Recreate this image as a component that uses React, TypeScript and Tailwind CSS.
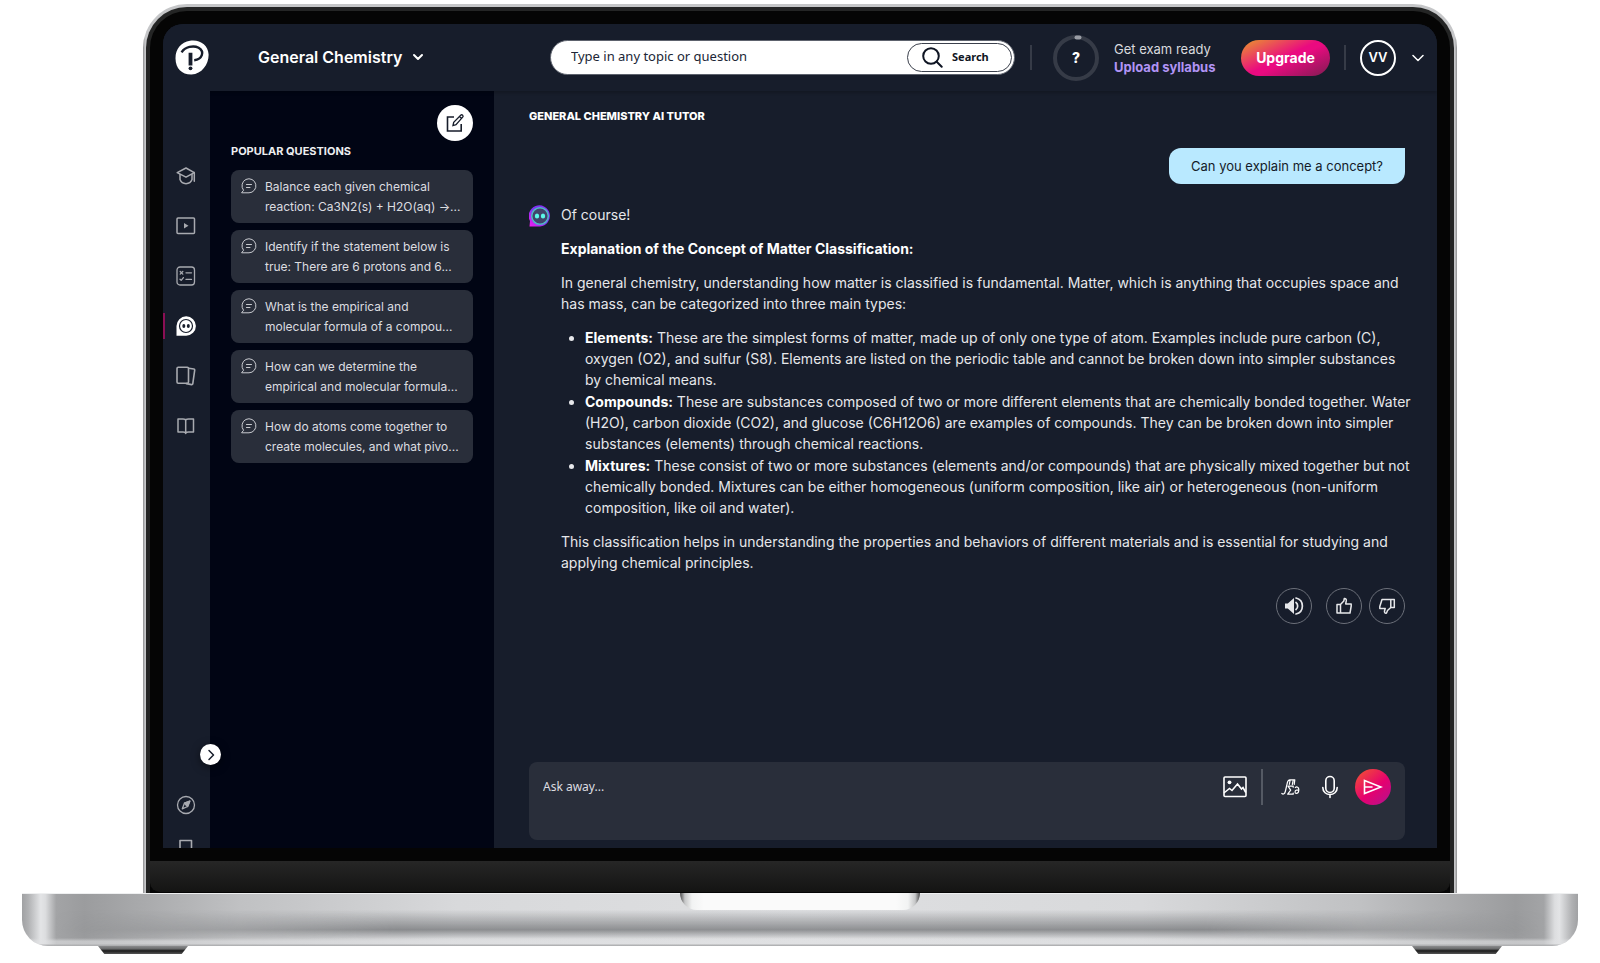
import React from "react";

const questions = [
  ["Balance each given chemical", "reaction: Ca3N2(s) + H2O(aq) →..."],
  ["Identify if the statement below is", "true: There are 6 protons and 6..."],
  ["What is the empirical and", "molecular formula of a compou..."],
  ["How can we determine the", "empirical and molecular formula..."],
  ["How do atoms come together to", "create molecules, and what pivo..."],
];

const matterTypes = [
  {
    name: "Elements:",
    text: "These are the simplest forms of matter, made up of only one type of atom. Examples include pure carbon (C), oxygen (O2), and sulfur (S8). Elements are listed on the periodic table and cannot be broken down into simpler substances by chemical means.",
  },
  {
    name: "Compounds:",
    text: "These are substances composed of two or more different elements that are chemically bonded together. Water (H2O), carbon dioxide (CO2), and glucose (C6H12O6) are examples of compounds. They can be broken down into simpler substances (elements) through chemical reactions.",
  },
  {
    name: "Mixtures:",
    text: "These consist of two or more substances (elements and/or compounds) that are physically mixed together but not chemically bonded. Mixtures can be either homogeneous (uniform composition, like air) or heterogeneous (non-uniform composition, like oil and water).",
  },
];

const stroke = {
  fill: "none",
  stroke: "currentColor",
  strokeLinecap: "round",
  strokeLinejoin: "round",
} as const;

const Logo = () => (
  <svg width="34" height="35" viewBox="0 0 34 35" aria-hidden="true">
    <path d="M15 .8C24.500-.8 33.300 5 33.600 14.500 33.900 24 27 34.300 16.500 34.500 7 34.700.600 28.500.500 18.500.400 9 6 2.200 15 .8z" fill="#fff" />
    <path d="M6.600 12.300C10 6.800 18.500 5 23.600 7.800c6.400 3.800 3.600 11.800-4.400 12.400" fill="none" stroke="#171d2b" strokeWidth="2.400" />
    <path d="M13.600 12.800h3.800v12.700h-3.800z" fill="#171d2b" />
    <circle cx="15.500" cy="28.300" r="1.900" fill="#171d2b" />
  </svg>
);

const ChatIcon = () => (
  <svg {...stroke} className="shrink-0 text-[#c9cbd0]" width="16" height="16" viewBox="0 0 16 16" aria-hidden="true">
    <path d="M1 14.800h7A7 7 0 1 0 2.300 12z" />
    <path d="M5.500 6.500h5M5.500 9.500h3.500" />
  </svg>
);

const navItems = [
  {
    label: "Learn",
    icon: (
      <svg {...stroke} strokeWidth="1.500" width="20" height="20" viewBox="0 0 20 20">
        <path d="M10 2 1.200 6.600 10 11.200l8.300-4.600z" />
        <path d="M4 8.400v5.200C6 19 14 19 16 13.600V8.400M18.300 6.600v8.600" />
      </svg>
    ),
  },
  {
    label: "Videos",
    icon: (
      <svg {...stroke} strokeWidth="1.500" width="20" height="20" viewBox="0 0 20 20">
        <rect x="1" y="2" width="17.500" height="15.500" rx="1" />
        <path d="m8 7 4.500 2.800L8 12.600z" fill="currentColor" stroke="none" />
      </svg>
    ),
  },
  {
    label: "Practice",
    icon: (
      <svg {...stroke} strokeWidth="1.300" width="20" height="20" viewBox="0 0 20 20">
        <rect x="1" y="1" width="17.500" height="18" rx="3" />
        <path d="m4.200 5.500 2.600 2.600m0-2.600L4.200 8.100M10 6.800h5.500M4 13.200l1.200 1.200 2.200-2.800M10 13.400h5.500" />
      </svg>
    ),
  },
  {
    label: "AI tutor",
    active: true,
    icon: (
      <svg width="20" height="20" viewBox="0 0 20 20">
        <path d="M.500 19.700V10A9.700 9.700 0 1 1 10.200 19.700z" fill="#fff" />
        <circle cx="10" cy="10" r="6.500" fill="#fff" stroke="#171d2b" strokeWidth="1.200" />
        <ellipse cx="7.800" cy="10" rx="1.500" ry="2" fill="#171d2b" />
        <ellipse cx="12.300" cy="10" rx="1.500" ry="2" fill="#171d2b" />
      </svg>
    ),
  },
  {
    label: "Flashcards",
    icon: (
      <svg {...stroke} strokeWidth="1.600" width="20" height="20" viewBox="0 0 20 20">
        <rect x="1" y="1.200" width="11.500" height="16" rx="1.200" />
        <path d="m12.800 2.200 5 .8c.7.1 1 .6.900 1.200L16.800 17.700c-.1.700-.6 1-1.200.9l-5.200-1" />
      </svg>
    ),
  },
  {
    label: "Textbook",
    icon: (
      <svg {...stroke} strokeWidth="1.500" width="20" height="20" viewBox="0 0 20 20">
        <path d="M2 3h5c1.600 0 2.700.5 2.700 1.500C9.700 3.500 11 3 12.500 3h5v13h-5c-1.500 0-2.800.5-2.800 1.500 0-1-1.100-1.500-2.700-1.500H2zM9.700 4.500v13" />
      </svg>
    ),
  },
];

const Header = () => (
  <header className="relative z-10 flex h-[67px] shrink-0 items-center bg-[#171d2b] pl-3 pr-[13px] shadow-[0_2px_3px_rgba(0,0,0,0.2)]">
    <a href="#home" aria-label="Home">
      <Logo />
    </a>
    <button type="button" className="ml-[49px] flex items-center gap-[10px] pb-[2px] text-base font-semibold text-white">
      General Chemistry
      <svg {...stroke} strokeWidth="2" width="12" height="8" viewBox="0 0 12 8" aria-hidden="true">
        <path d="m2 2 4 4 4-4" />
      </svg>
    </button>

    <form
      role="search"
      className="ml-auto flex h-[35px] w-[465px] items-center rounded-full border border-[#5d626d] bg-white pl-5 pr-[2px] font-['Noto_Sans',sans-serif] text-[#0f1523]"
      onSubmit={(e) => e.preventDefault()}
    >
      <input
        type="text"
        aria-label="Search"
        placeholder="Type in any topic or question"
        className="min-w-0 flex-1 pb-[2px] text-[13px] outline-none placeholder:text-[#202636]"
      />
      <button type="submit" className="flex h-[29px] w-[105px] items-center gap-[9px] rounded-full border border-[#3b404c] pl-[14px] text-[11px] font-bold">
        <svg {...stroke} strokeWidth="2" width="21" height="21" viewBox="0 0 21 21" aria-hidden="true">
          <circle cx="9" cy="9" r="7.800" />
          <path d="m14.700 14.700 5 5" />
        </svg>
        Search
      </button>
    </form>

    <div className="ml-[15px] h-[25px] w-[2px] bg-[#363b47]" />

    <div className="ml-[21px] grid size-[46px] place-items-center">
      <svg className="col-start-1 row-start-1" width="46" height="46" viewBox="0 0 46 46" aria-hidden="true">
        <circle cx="23" cy="23" r="21" fill="none" stroke="#363b47" strokeWidth="4" />
        <path d="M23.500 2.500h3" stroke="#9a9da5" strokeWidth="4" strokeLinecap="round" />
      </svg>
      <span className="col-start-1 row-start-1 text-sm font-extrabold text-white">?</span>
    </div>
    <div className="ml-[15px] w-[127px] text-[13px] leading-[18px]">
      <p className="text-[#d9dade]">Get exam ready</p>
      <a href="#syllabus" className="font-bold text-[#b194f5]">
        Upload syllabus
      </a>
    </div>
    <button
      type="button"
      className="h-[36px] w-[89px] rounded-full bg-[linear-gradient(155deg,#ea8a34_5%,#ea0a80_48%,#ea0a80_55%,#8a1a56_95%)] text-sm font-bold text-white"
    >
      Upgrade
    </button>
    <div className="ml-[14px] h-[25px] w-[2px] bg-[#363b47]" />
    <button type="button" aria-label="Account" className="ml-[14px] flex items-center gap-4 text-white">
      <span className="grid size-[36px] place-items-center rounded-full border-2 border-white text-[13px] font-semibold">VV</span>
      <svg {...stroke} strokeWidth="1.500" width="12" height="8" viewBox="0 0 12 8" aria-hidden="true">
        <path d="m1 1.500 5 5 5-5" />
      </svg>
    </button>
  </header>
);

const Sidebar = () => (
  <aside className="relative z-10 flex w-[47px] shrink-0 flex-col bg-[#171d2b] text-[#a8aab0]">
    <nav className="mt-[75px] flex flex-col gap-[30px]">
      {navItems.map((item) => (
        <a key={item.label} href="#nav" aria-label={item.label} className="relative flex h-5 justify-center pr-[2px]">
          {item.active && <span className="absolute -top-[3px] left-0 h-[26px] w-[2px] bg-[#8a0f55]" />}
          {item.icon}
        </a>
      ))}
    </nav>
    <div className="mt-auto flex h-[53px] flex-col items-center gap-6 overflow-hidden pr-[2px]">
      <a href="#explore" aria-label="Explore" className="shrink-0">
        <svg {...stroke} strokeWidth="1.300" width="20" height="20" viewBox="0 0 20 20">
          <circle cx="10" cy="10" r="8.500" />
          <path d="M13.800 6.200 8.500 8 6.300 13.800l5.300-2.300z" />
          <path d="M13.800 6.200 8.500 8l1.500 2 1.600 1.500z" fill="currentColor" />
        </svg>
      </a>
      <a href="#bookmarks" aria-label="Bookmarks" className="shrink-0">
        <svg {...stroke} strokeWidth="1.600" width="20" height="20" viewBox="0 0 20 20">
          <path d="M4 1.500h11.500V18L9.700 14 4 18z" />
        </svg>
      </a>
    </div>
    <button
      type="button"
      aria-label="Expand menu"
      className="absolute -right-[11px] bottom-[83px] grid size-[21px] place-items-center rounded-full bg-white text-[#171d2b] shadow-[0_2px_8px_rgba(0,0,0,0.5)]"
    >
      <svg {...stroke} strokeWidth="1.500" width="8" height="12" viewBox="0 0 8 12">
        <path d="m2 1.500 4.500 4.500L2 10.500" />
      </svg>
    </button>
  </aside>
);

const PopularQuestions = () => (
  <section className="flex w-[284px] shrink-0 flex-col bg-[#010514] px-[21px] pt-[14px]">
    <button type="button" aria-label="New chat" className="grid size-[36px] place-items-center self-end rounded-full bg-white text-[#171d2b]">
      <svg {...stroke} strokeLinecap="butt" strokeLinejoin="miter" strokeWidth="1.600" width="20" height="20" viewBox="0 0 20 20">
        <path d="M9 4H2.500v14h13.700v-7" />
        <path d="m8 12.500.7-3.100 7-7.200c1.300-1.200 3.200.6 2 1.900L11 11.600zM14.500 3.500l2.200 2.100" strokeWidth="1.300" />
      </svg>
    </button>
    <h2 className="text-[11px] font-bold leading-5 text-[#eeeff1]">POPULAR QUESTIONS</h2>
    <ul className="mt-[9px] flex flex-col gap-[7px]">
      {questions.map(([first, second]) => (
        <li key={first}>
          <button type="button" className="flex h-[53px] w-full gap-2 rounded-lg bg-[#292e3a] px-[10px] py-[7px] text-left text-xs leading-5 text-[#dcdde0]">
            <span className="pt-px">
              <ChatIcon />
            </span>
            <span className="whitespace-nowrap">
              {first}
              <br />
              {second}
            </span>
          </button>
        </li>
      ))}
    </ul>
  </section>
);

const BotIcon = () => (
  <svg className="mt-px shrink-0" width="22" height="22" viewBox="0 0 22 22" aria-hidden="true">
    <defs>
      <linearGradient id="bot" x1="0" y1="1" x2="1" y2="0">
        <stop offset="0" stopColor="#f81bf0" />
        <stop offset=".5" stopColor="#7b35f2" />
        <stop offset="1" stopColor="#8a2cf5" />
      </linearGradient>
    </defs>
    <path d="M.500 21.500 1 16A10.600 10.600 0 1 1 11 21.500z" fill="url(#bot)" />
    <circle cx="11" cy="11" r="8.300" fill="#41436b" stroke="#4fb8c4" strokeWidth="1.500" />
    <ellipse cx="8" cy="11" rx="2.200" ry="2.600" fill="#5cf7e8" />
    <ellipse cx="14" cy="11" rx="2.200" ry="2.600" fill="#5cf7e8" />
  </svg>
);

const Feedback = () => (
  <div className="mt-[15px] flex justify-end text-[#e6e7ea]">
    <button type="button" aria-label="Read aloud" className="mr-[14px] grid size-[36px] place-items-center rounded-full border border-[#6b6f79]">
      <svg {...stroke} strokeWidth="1.700" width="20" height="20" viewBox="0 0 20 20">
        <path d="M1 7.500h2.800L10 2v16l-6.200-5.500H1z" fill="currentColor" stroke="none" />
        <path d="M12 6.500c2.200 1.500 2.200 5.500 0 7M12 2c8.500 2 8.500 14 0 16" />
      </svg>
    </button>
    <button type="button" aria-label="Good answer" className="mr-[7px] grid size-[36px] place-items-center rounded-full border border-[#6b6f79]">
      <svg {...stroke} strokeWidth="1.500" width="18" height="18" viewBox="0 0 18 18">
        <path d="M2 7.500h3.500V16H2zM5.500 7.500 8.800 4l.5-2.500c1.300-.3 2.200.8 2 2.200L10.700 7h5.500v2L15 16H5.500" />
      </svg>
    </button>
    <button type="button" aria-label="Bad answer" className="grid size-[36px] place-items-center rounded-full border border-[#6b6f79]">
      <svg {...stroke} strokeWidth="1.500" width="18" height="18" viewBox="0 0 18 18">
        <path d="M12.800 2.500h3.500v8h-3.500zM12.800 10.500 9.500 13.500 8.500 16c-1.500.5-2.300-.6-2-2l.7-2.500H1.800v-2L4 2.500h8.800" />
      </svg>
    </button>
  </div>
);

const AskBox = () => (
  <form
    className="mb-2 mt-auto flex h-[78px] shrink-0 items-start rounded-lg bg-[#292e3a] px-[14px] pt-[7px] text-white"
    onSubmit={(e) => e.preventDefault()}
  >
    <textarea
      aria-label="Ask away"
      placeholder="Ask away..."
      className="h-[60px] min-w-0 flex-1 resize-none pt-2 font-['Noto_Sans',sans-serif] text-xs leading-5 outline-none placeholder:text-[#dcdde0]"
    />
    <div className="flex h-[36px] items-center">
      <button type="button" aria-label="Add image">
        <svg {...stroke} strokeWidth="1.600" width="24" height="22" viewBox="0 0 24 22">
          <rect x="1" y="1" width="22" height="19.500" rx="1" />
          <path d="m1.500 16.500 5-4 2.500 2 5.500-6.500 4 5 1.500-1.500L22.500 16" strokeLinejoin="miter" />
          <circle cx="6.500" cy="6.300" r="1.900" fill="currentColor" stroke="none" />
        </svg>
      </button>
      <div className="ml-[14px] h-[36px] w-[2px] bg-[#555a64]" />
      <button type="button" aria-label="Insert equation" className="ml-[18px]">
        <svg {...stroke} strokeWidth="1.200" width="19" height="19" viewBox="0 0 19 19">
          <path d="M.800 15.500c1.500 1.200 3 .2 3.500-2L6.300 5c.5-2.500 1.700-3.400 3-3.200h4.500M9.200 2 8.300 6.500M12.300 2l-1 4.500M13.800 1.800l-.6 4.500" />
          <path d="M12.200 9.200V8.200H7l2.700 4L6.700 16.200h5.500v-1.100" />
          <path d="M14.300 9.500c1.600-1.200 3.500-.3 3.500 2 0 2.700-1.200 3.900-2.500 3.900-1.600 0-1.800-2.900.2-3.200h2.200" />
        </svg>
      </button>
      <button type="button" aria-label="Dictate" className="ml-[21px]">
        <svg {...stroke} strokeWidth="1.600" width="18" height="24" viewBox="0 0 18 24">
          <rect x="4.800" y="1.500" width="8.400" height="16" rx="4.200" />
          <path d="M1.800 12.500c0 9.300 14.400 9.300 14.400 0M9 19.500V22.500" />
        </svg>
      </button>
      <button
        type="submit"
        aria-label="Send"
        className="ml-4 grid size-[36px] place-items-center rounded-full bg-[linear-gradient(140deg,#f0453c_12%,#e6006f_55%,#b5128c_95%)]"
      >
        <svg {...stroke} strokeWidth="1.600" strokeLinejoin="miter" width="20" height="18" viewBox="0 0 20 18">
          <path d="m1.500 2.500 16.500 6.500-16.500 6.500zM2 9h7" />
        </svg>
      </button>
    </div>
  </form>
);

const Tutor = () => (
  <main className="flex min-w-0 flex-1 flex-col bg-[#171d2b] pl-[35px] pr-8 pt-[15px]">
    <h1 className="text-[11px] font-extrabold leading-5 text-white">GENERAL CHEMISTRY AI TUTOR</h1>
    <p className="mt-[22px] self-end rounded-xl rounded-tr-none bg-[#b9e9ff] px-[22px] py-2 text-[13px] leading-5 text-[#141b29]">
      Can you explain me a concept?
    </p>
    <div className="mt-5 flex gap-[10px]">
      <BotIcon />
      <div className="-mr-2 flex flex-1 flex-col gap-[13px] text-sm leading-[21px] text-[#e6e7ea]">
        <p>Of course!</p>
        <h2 className="font-bold text-white">Explanation of the Concept of Matter Classification:</h2>
        <p>
          In general chemistry, understanding how matter is classified is fundamental. Matter, which is anything that
          occupies space and has mass, can be categorized into three main types:
        </p>
        <ul className="flex list-outside list-disc flex-col gap-px pl-6">
          {matterTypes.map((type) => (
            <li key={type.name}>
              <strong className="text-white">{type.name}</strong> {type.text}
            </li>
          ))}
        </ul>
        <p>
          This classification helps in understanding the properties and behaviors of different materials and is
          essential for studying and applying chemical principles.
        </p>
      </div>
    </div>
    <Feedback />
    <AskBox />
  </main>
);

const LaptopBase = () => (
  <div className="shrink-0">
    <div className="relative flex h-[53px] justify-center overflow-hidden rounded-b-[26px] bg-[linear-gradient(90deg,#a0a1a3_0%,#b0b1b3_0.4%,#e3e4e6_1.2%,#dcdddf_1.5%,#a3a4a6_2.2%,#9b9c9e_4%,#c0c1c3_14%,#d8d9db_28%,#dedfe1_50%,#d8d9db_72%,#c0c1c3_86%,#9b9c9e_96%,#a3a4a6_97.800%,#dcdddf_98.500%,#e3e4e6_98.800%,#b0b1b3_99.600%,#a0a1a3_100%)]">
      <div className="absolute inset-x-0 bottom-0 h-[36px] bg-[linear-gradient(180deg,transparent,rgba(90,92,95,0.6)_55%,transparent_80%,transparent_95%,rgba(130,130,132,0.7))] [mask-image:linear-gradient(90deg,transparent_2%,#000_24%,#000_76%,transparent_98%)]" />
      <div className="absolute inset-x-0 bottom-0 h-2 bg-[linear-gradient(180deg,transparent,rgba(225,226,228,0.6)_40%,rgba(225,226,228,0.6)_70%,#a9aaac)]" />
      <div className="absolute inset-x-0 top-0 h-px bg-[#eeeff0]" />
      <div className="relative h-[17px] w-[240px] rounded-b-[17px] bg-[linear-gradient(90deg,#4a4a4b,#c5c6c7_2%,#f2f3f3_5%,#fafafa_10%,#fafafa_90%,#f2f3f3_95%,#c5c6c7_98%,#4a4a4b)]" />
    </div>
    <div className="flex justify-between px-[76px]">
      <div className="h-2 w-[90px] bg-[linear-gradient(180deg,#8b8c8e,#6b6c6d_35%,#1c1c1c_60%,#555)] [clip-path:polygon(0_0,100%_0,93%_100%,7%_100%)]" />
      <div className="h-2 w-[90px] bg-[linear-gradient(180deg,#8b8c8e,#6b6c6d_35%,#1c1c1c_60%,#555)] [clip-path:polygon(0_0,100%_0,93%_100%,7%_100%)]" />
    </div>
  </div>
);

const App = () => {
  return (
    <div className="flex h-screen min-h-[820px] min-w-[1360px] flex-col bg-white px-[22px] pb-[9px] pt-1 font-['Inter',sans-serif]">
      <div className="mx-[121px] flex min-h-0 flex-1 flex-col rounded-t-[44px] bg-[linear-gradient(90deg,#8d8e90,#c5c6c8_2px,#c5c6c8_calc(100%-2px),#8d8e90)] px-[3px] pt-[3px]">
        <div className="flex min-h-0 flex-1 flex-col rounded-t-[41px] bg-[#242525] px-1 pt-1">
          <div className="flex min-h-0 flex-1 flex-col rounded-t-[37px] bg-[#050505] px-[13px] pt-[13px]">
            <div className="flex min-h-0 flex-1 flex-col overflow-hidden rounded-t-[20px] bg-[#171d2b]">
              <Header />
              <div className="flex min-h-0 flex-1">
                <Sidebar />
                <PopularQuestions />
                <Tutor />
              </div>
            </div>
            <div className="-mx-[13px] mt-[13px] h-8 shrink-0 rounded-b-[10px] border-b border-[#050505] bg-[linear-gradient(180deg,#262626,#141413)]" />
          </div>
        </div>
      </div>
      <LaptopBase />
    </div>
  );
};

export default App;
